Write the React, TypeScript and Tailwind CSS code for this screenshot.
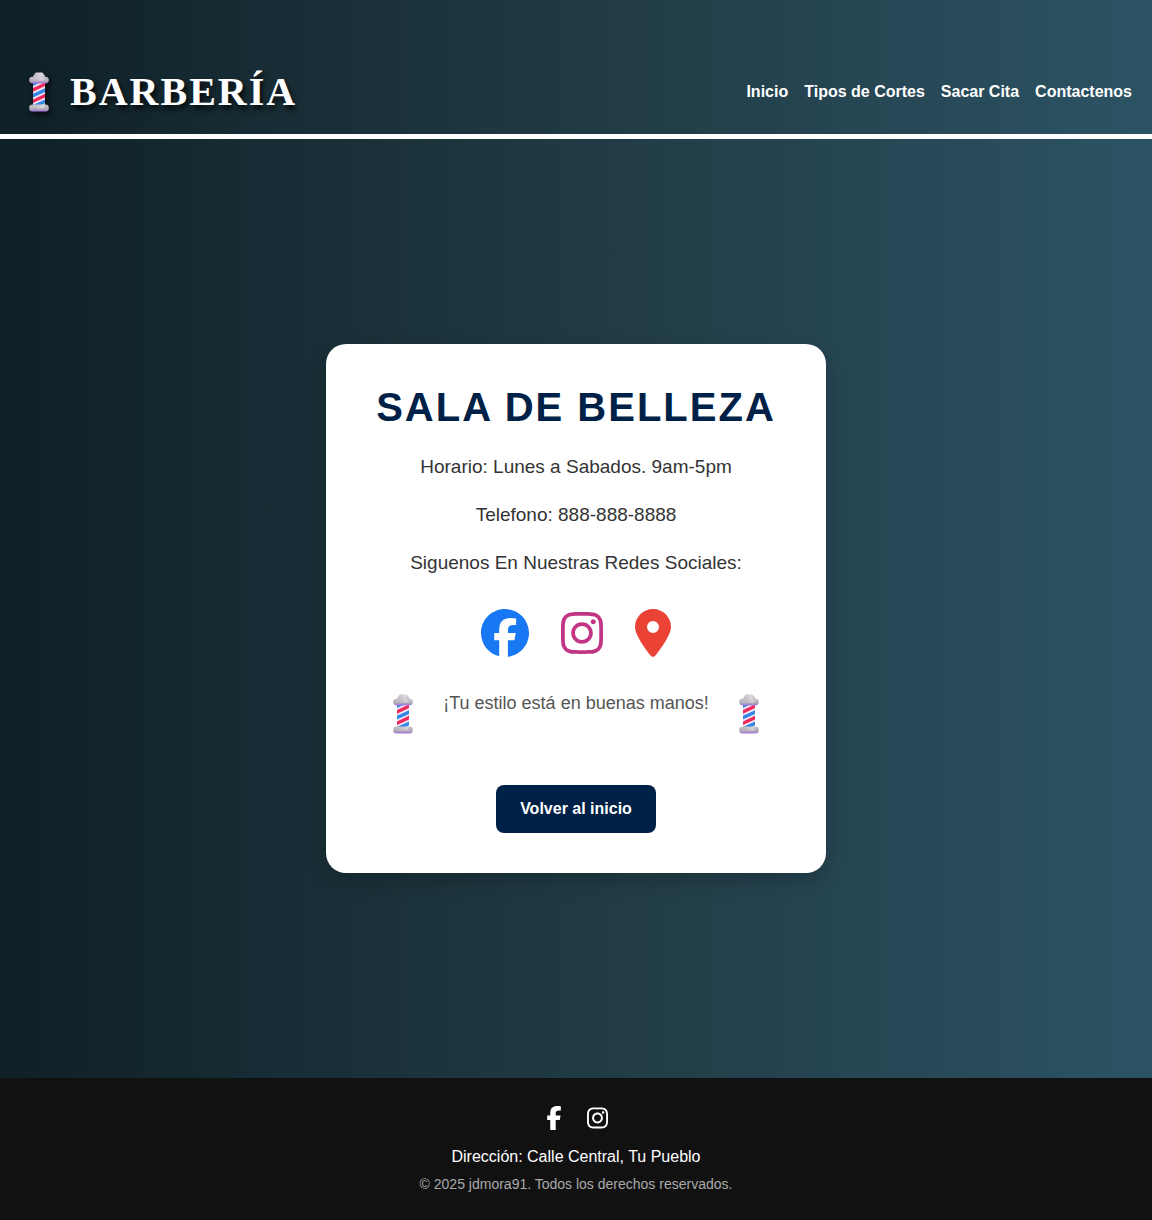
import { useId } from "react";
import { FaFacebook, FaFacebookF, FaInstagram, FaLocationDot } from "react-icons/fa6";

function BarberPole({ className = "" }: { className?: string }) {
  const id = useId().replace(/[^a-zA-Z0-9]/g, "");
  return (
    <svg viewBox="0 0 20 40" className={`h-10 w-5 shrink-0 ${className}`} aria-hidden="true">
      <defs>
        <linearGradient id={`${id}cap`} x1="0" y1="0" x2="0" y2="1">
          <stop offset="0" stopColor="#c4c0c6" />
          <stop offset="0.6" stopColor="#b2aeb6" />
          <stop offset="1" stopColor="#a473de" />
        </linearGradient>
        <linearGradient id={`${id}dome`} x1="0" y1="0" x2="1" y2="0">
          <stop offset="0" stopColor="#bbb7be" />
          <stop offset="0.7" stopColor="#dedbe0" />
          <stop offset="1" stopColor="#b4b0b8" />
        </linearGradient>
        <linearGradient id={`${id}shine`} x1="0" y1="0" x2="1" y2="0">
          <stop offset="0" stopColor="#c8c4d0" stopOpacity="0" />
          <stop offset="0.7" stopColor="#f5f2f8" stopOpacity="0.5" />
          <stop offset="1" stopColor="#aaa6ae" stopOpacity="0" />
        </linearGradient>
        <clipPath id={`${id}tube`}>
          <rect x="4" y="10" width="12" height="23.5" />
        </clipPath>
      </defs>
      <path
        d="M4.2 8V4.6C4.2 3.4 4.8 2.8 5.6 2.4 5.8 1.2 6.8.6 8.2.6h4c1.400 0 2.400.6 2.600 1.800.8.4 1.400 1 1.400 2.200V8z"
        fill={`url(#${id}dome)`}
      />
      <g clipPath={`url(#${id}tube)`}>
        <rect x="4" y="9" width="12" height="25" fill="#efe6f6" />
        <path d="M4 10.2 16 4.600v3.700L4 13.900z" fill="#3385e6" />
        <path d="M4 16 16 10.400v3.700L4 19.700z" fill="#f0285a" />
        <path d="M4 21.800 16 16.200v3.700L4 25.500z" fill="#3385e6" />
        <path d="M4 27.400 16 21.800v3.700L4 31.100z" fill="#f0285a" />
        <path d="M4 33.100 16 27.500v3.700L4 36.800z" fill="#3385e6" />
      </g>
      <rect x="0.2" y="4.8" width="19.6" height="6.6" rx="3.3" fill={`url(#${id}cap)`} />
      <rect x="1" y="5.2" width="18" height="3.5" rx="1.7" fill={`url(#${id}shine)`} />
      <rect x="0.2" y="32.5" width="19.6" height="7" rx="3.3" fill={`url(#${id}cap)`} />
      <rect x="1" y="33" width="18" height="3.5" rx="1.7" fill={`url(#${id}shine)`} />
    </svg>
  );
}

const navItems = ["Inicio", "Tipos de Cortes", "Sacar Cita", "Contactenos"];

function Header() {
  return (
    <header className="flex flex-wrap items-center justify-between gap-4 border-b-5 border-white px-5 pt-[69px] pb-[19px]">
      <div className="flex items-center pl-[9px]">
        <BarberPole className="drop-shadow-[2px_3px_3px_rgba(0,0,0,0.7)]" />
        <span className="ml-[21px] font-['Liberation_Serif',serif] text-[40px] leading-[46px] font-bold tracking-[2px] uppercase [text-shadow:2px_4px_5px_rgba(0,0,0,0.8)]">
          Barbería
        </span>
      </div>
      <nav className="flex flex-wrap gap-4">
        {navItems.map((item) => (
          <a key={item} href="#" className="text-base font-bold">
            {item}
          </a>
        ))}
      </nav>
    </header>
  );
}

function ContactCard() {
  return (
    <section className="w-full max-w-[500px] rounded-[20px] bg-white p-10 text-center text-[#333] shadow-[0_8px_20px_rgba(0,0,0,0.2)]">
      <h1 className="text-[40px] leading-[46px] font-bold tracking-[2px] whitespace-nowrap text-[#002147] uppercase">
        Sala de Belleza
      </h1>
      <div className="mt-[25px] flex flex-col gap-6 text-[19px] leading-6">
        <p>Horario: Lunes a Sabados. 9am-5pm</p>
        <p>Telefono: 888-888-8888</p>
        <p>Siguenos En Nuestras Redes Sociales:</p>
      </div>
      <div className="mt-[34px] flex justify-center gap-8 text-5xl">
        <a href="#" aria-label="Facebook" className="text-[#1877f2]">
          <FaFacebook />
        </a>
        <a href="#" aria-label="Instagram" className="text-[#c13584]">
          <FaInstagram className="w-[42px]" />
        </a>
        <a href="#" aria-label="Ubicación" className="text-[#ea4335]">
          <FaLocationDot className="w-9" />
        </a>
      </div>
      <div className="mt-9 flex items-start justify-center gap-[30px]">
        <BarberPole className="mt-px" />
        <p className="text-[18px] leading-5 text-[#555]">¡Tu estilo está en buenas manos!</p>
        <BarberPole className="mt-px" />
      </div>
      <a
        href="#"
        className="mt-[51px] inline-block rounded-lg bg-[#002147] px-6 py-3 align-top text-base font-bold text-white"
      >
        Volver al inicio
      </a>
    </section>
  );
}

function Footer() {
  return (
    <footer className="bg-[#111] px-5 pt-7 pb-[26px] text-center">
      <div className="flex justify-center gap-[25px] pl-0.5 text-2xl">
        <a href="#" aria-label="Facebook">
          <FaFacebookF className="w-4" />
        </a>
        <a href="#" aria-label="Instagram">
          <FaInstagram className="w-[21px]" />
        </a>
      </div>
      <p className="mt-[17px] text-base leading-5">Dirección: Calle Central, Tu Pueblo</p>
      <p className="mt-[7px] text-sm leading-5 text-[#aaa]">© 2025 jdmora91. Todos los derechos reservados.</p>
    </footer>
  );
}

export default function App() {
  return (
    <div className="flex min-h-screen flex-col bg-linear-[to_right,#0f2027,#203a43,#2c5364] font-['Liberation_Sans',Arial,sans-serif] text-white">
      <Header />
      <main className="flex flex-1 items-center justify-center px-4 py-10">
        <ContactCard />
      </main>
      <Footer />
    </div>
  );
}
